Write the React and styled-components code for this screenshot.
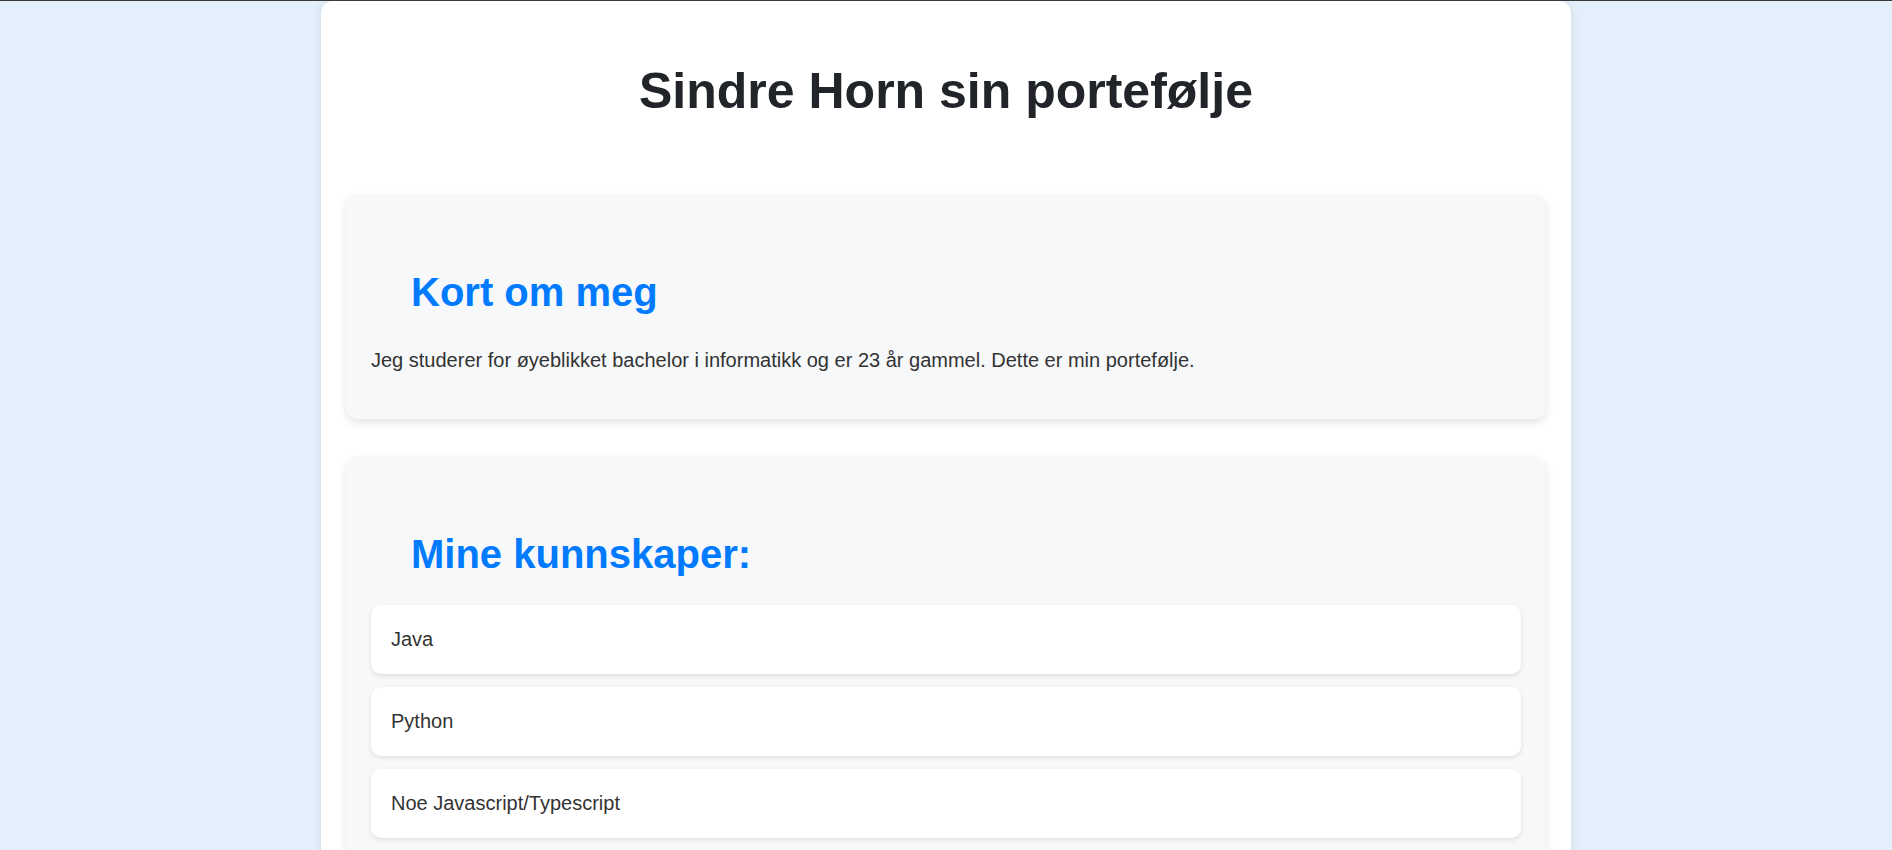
import React from "react";
import styled, { createGlobalStyle } from "styled-components";

const GlobalStyle = createGlobalStyle`
    * {
        box-sizing: border-box;
    }
    body {
        margin: 0;
        border-top: 1px solid #3a3a3a;
        background: #e3f0fb;
        font-family: "Liberation Sans", Arial, sans-serif;
        font-size: 20px;
        color: #333;
    }
`;

const skills = ["Java", "Python", "Noe Javascript/Typescript"];

const App = () => {
    return (
        <>
            <GlobalStyle />
            <Wrapper>
                <Title>Sindre Horn sin portefølje</Title>
                <Section>
                    <SectionTitle>Kort om meg</SectionTitle>
                    <Text>
                        Jeg studerer for øyeblikket bachelor i informatikk og er 23 år gammel.
                        Dette er min portefølje.
                    </Text>
                </Section>
                <Section>
                    <SectionTitle>Mine kunnskaper:</SectionTitle>
                    <SkillList>
                        {skills.map(skill => (
                            <Skill key={skill}>{skill}</Skill>
                        ))}
                    </SkillList>
                </Section>
            </Wrapper>
        </>
    );
};

export default App;

const Wrapper = styled.main`
    width: 1250px;
    margin: 0 auto;
    padding: 25px;
    background: #fff;
    border-radius: 12px;
    box-shadow: 0 0 10px rgba(0, 0, 0, 0.1);
`;

const Title = styled.h1`
    margin: 36px 0 74px;
    text-align: center;
    font-size: 50px;
    font-weight: bold;
    color: #212529;
`;

const Section = styled.section`
    padding: 25px;
    margin-bottom: 37px;
    background: #f7f8fa;
    border-radius: 12px;
    box-shadow: 0 4px 8px rgba(0, 0, 0, 0.1);
`;

const SectionTitle = styled.h2`
    margin: 51px 0 28px 40px;
    font-size: 40px;
    font-weight: bold;
    color: #007bff;
`;

/* margin-top collapses with the heading's 28px, so it must exceed it */
const Text = styled.p`
    margin: 34px 0 22px;
    line-height: normal;
`;

const SkillList = styled.ul`
    list-style: none;
    margin: 0;
    padding: 0;
    display: flex;
    flex-direction: column;
    gap: 13px;
`;

const Skill = styled.li`
    padding: 23px 20px;
    background: #fff;
    border-radius: 10px;
    box-shadow: 0 2px 5px rgba(0, 0, 0, 0.1);
`;
